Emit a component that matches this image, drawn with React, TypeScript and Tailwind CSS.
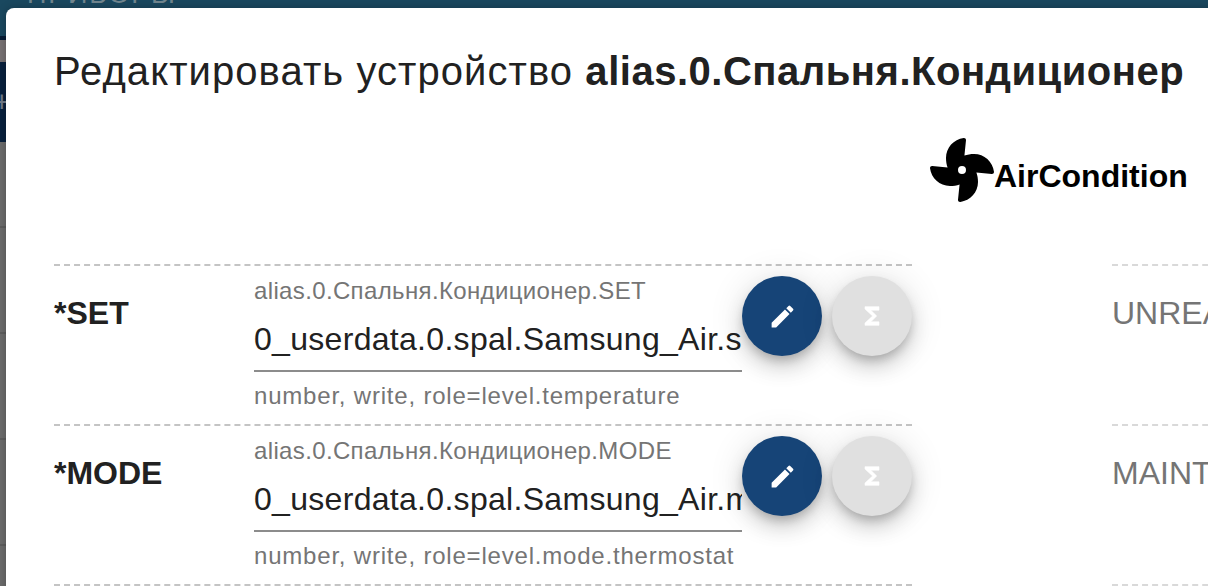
import { FaFan } from "react-icons/fa"
import { MdEdit } from "react-icons/md"

interface Channel {
  name: string
  id: string
  value: string
  hint: string
  indicator: string
}

const channels: Channel[] = [
  {
    name: "SET",
    id: "alias.0.Спальня.Кондиционер.SET",
    value: "0_userdata.0.spal.Samsung_Air.set",
    hint: "number, write, role=level.temperature",
    indicator: "UNREACH",
  },
  {
    name: "MODE",
    id: "alias.0.Спальня.Кондиционер.MODE",
    value: "0_userdata.0.spal.Samsung_Air.mode",
    hint: "number, write, role=level.mode.thermostat",
    indicator: "MAINTAIN",
  },
]

const fab =
  "flex h-20 w-20 shrink-0 items-center justify-center rounded-full text-white shadow-[0_6px_10px_-2px_rgba(0,0,0,0.2),0_12px_20px_0_rgba(0,0,0,0.14),0_2px_36px_0_rgba(0,0,0,0.12)]"

function FunctionIcon() {
  return (
    <svg viewBox="0 0 24 24" className="h-7 w-7 fill-white stroke-white stroke-[0.5]">
      <path d="M18 4H6v2l6.5 6L6 18v2h12v-3h-7l5-5-5-5h7z" />
    </svg>
  )
}

// Dimmed page behind the dialog
function Backdrop() {
  return (
    <div className="absolute inset-0 flex flex-col overflow-hidden bg-[#6b6b6b]">
      <div className="h-9 shrink-0 bg-[#1a485f]">
        <div className="-mt-[21px] pl-[27px] text-[27px] leading-[30px] tracking-[1.8px] text-[#71868f]">ПРИБОРЫ</div>
      </div>
      <div className="h-1 shrink-0 bg-[#071c35]" />
      <div className="h-[22px] shrink-0 bg-[#777173]" />
      <div className="h-20 shrink-0 bg-[#08203d] pt-[22px] text-[30px] leading-[36px] text-[#707b88]">
        <span className="-ml-[7px]">+</span>
      </div>
      <div className="h-[86px] shrink-0 border-b-2 border-[#5d5d5d]" />
      <div className="h-[106px] shrink-0 border-b-2 border-[#5d5d5d]" />
      <div className="h-[106px] shrink-0 border-b-2 border-[#5d5d5d]" />
      <div className="h-[106px] shrink-0 border-b-2 border-[#5d5d5d]" />
    </div>
  )
}

function ChannelRow({ channel }: { channel: Channel }) {
  return (
    <div className="flex h-40 w-[858px] border-t-2 border-dashed border-[#c4c4c4]">
      <div className="w-[200px] pt-[29px] text-[32px] leading-[36px] font-bold text-[#212121]">*{channel.name}</div>
      <div className="w-[488px] pt-[9px]">
        <div className="text-2xl leading-[32px] tracking-[0.36px] whitespace-nowrap text-[#757575]">{channel.id}</div>
        <div className="h-[65px] overflow-hidden border-b-2 border-[#8c8c8c] pt-[13px] text-[32px] leading-[38px] tracking-[0.3px] whitespace-nowrap text-[#212121]">
          {channel.value}
        </div>
        <div className="mt-2 text-2xl leading-[32px] tracking-[0.8px] whitespace-nowrap text-[#757575]">{channel.hint}</div>
      </div>
      <div className="flex gap-[10px] pt-[10px]">
        <button className={`${fab} bg-[#164477]`}>
          <MdEdit className="h-[29px] w-[29px]" />
        </button>
        <button className={`${fab} bg-[#e0e0e0]`}>
          <FunctionIcon />
        </button>
      </div>
    </div>
  )
}

export default function App() {
  return (
    <div className="relative h-[586px] w-[1208px] overflow-hidden font-['Liberation_Sans',Arial,sans-serif]">
      <Backdrop />
      <div className="absolute top-2 left-1.5 h-[640px] w-[1400px] rounded-lg bg-white px-12 pt-[31px] shadow-[0_0_8px_rgba(0,0,0,0.25)]">
        <h2 className="text-[40px] leading-[64px] tracking-[1.07px] whitespace-nowrap text-[#212121]">
          Редактировать устройство <b className="tracking-[0.52px]">alias.0.Спальня.Кондиционер</b>
        </h2>
        <div className="mt-[35px] ml-[876px] flex h-16 items-center text-[32px] font-bold text-black">
          <FaFan className="h-16 w-16 shrink-0" />
          <span className="pt-3">AirCondition</span>
        </div>
        <div className="mt-[62px] flex gap-[200px]">
          <div className="shrink-0">
            {channels.map((channel) => (
              <ChannelRow key={channel.name} channel={channel} />
            ))}
            <div className="border-t-2 border-dashed border-[#c4c4c4]" />
          </div>
          <div className="w-[858px] shrink-0">
            {channels.map((channel) => (
              <div
                key={channel.indicator}
                className="h-40 border-t-2 border-dashed border-[#d9d9d9] pt-[29px] text-[32px] leading-[36px] text-[#757575]"
              >
                {channel.indicator}
              </div>
            ))}
            <div className="border-t-2 border-dashed border-[#d9d9d9]" />
          </div>
        </div>
      </div>
    </div>
  )
}
